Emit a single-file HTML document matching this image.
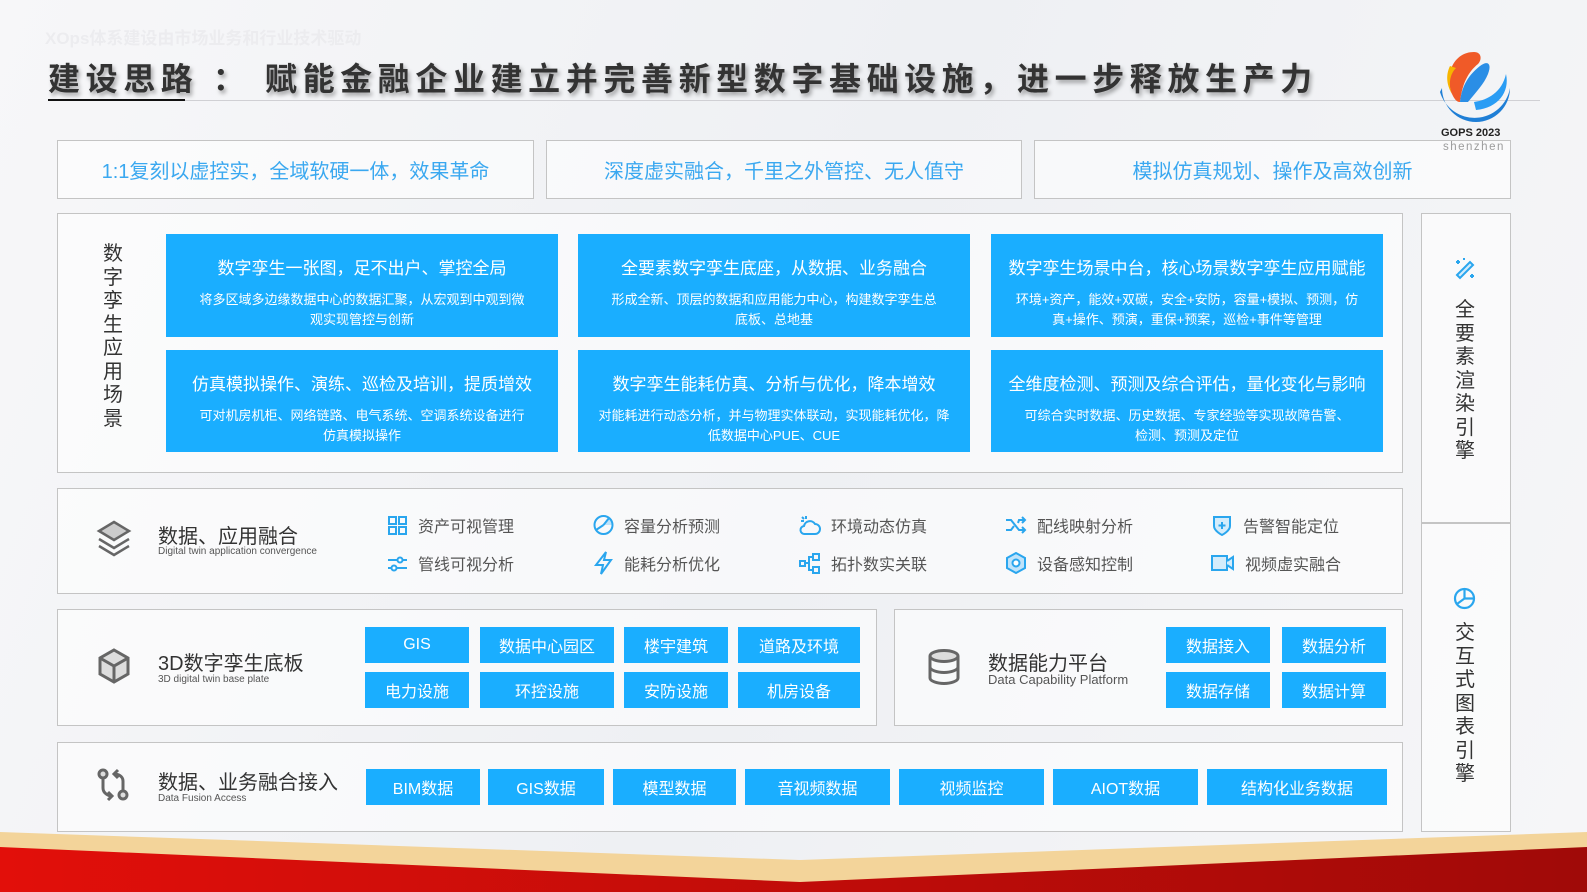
<!DOCTYPE html>
<html><head><meta charset="utf-8"><style>
*{margin:0;padding:0;box-sizing:border-box}
body{width:1587px;height:892px;position:relative;overflow:hidden;background:#f4f5f8;font-family:"Liberation Sans","Noto Sans CJK SC",sans-serif;color:#333}
.a{position:absolute}
.box{position:absolute;border:1.5px solid #c4c4c4;background:rgba(255,255,255,.55)}
.tb{color:#3aa8f0;font-size:20px;display:flex;align-items:center;justify-content:center}
.card{position:absolute;background:#1aaeff;color:#fff;text-align:center}
.card h3{font-weight:normal;font-size:17px;margin-top:20px}
.card p{font-size:13px;line-height:20px;margin:11px 30px 0}
.btn{position:absolute;background:#1aaeff;color:#fff;font-size:16px;display:flex;align-items:center;justify-content:center}
.vt{position:absolute;width:24px;font-size:20px;line-height:23.5px;text-align:center;color:#333}
.it{position:absolute;font-size:16px;color:#555;display:flex;align-items:center}
.it svg{margin-right:10px}
.t1{position:absolute;font-size:20px;color:#333}
.t2{position:absolute;font-size:10px;color:#555}
</style></head><body>
<div class="a" style="left:0;top:0;width:1587px;height:892px;background:linear-gradient(110deg,#f7f7f9 0%,#eef0f3 50%,#f6f6f8 100%)"></div>
<div class="a" style="left:45px;top:24px;font-size:17px;font-weight:bold;color:#ececef">XOps体系建设由市场业务和行业技术驱动</div>
<!-- title -->
<div class="a" style="left:48px;top:54px;font-size:32px;font-weight:bold;color:#333;letter-spacing:5.6px;white-space:nowrap;text-shadow:2px 3px 4px rgba(0,0,0,.35)">建设思路 ： 赋能金融企业建立并完善新型数字基础设施，进一步释放生产力</div>
<div class="a" style="left:48px;top:100px;width:1492px;height:1px;background:#d0d0d4"></div>
<div class="a" style="left:48px;top:99px;width:137px;height:2px;background:#111"></div>
<!-- logo -->
<svg class="a" style="left:1432px;top:44px" width="86" height="86" viewBox="0 0 86 86">
<path d="M8 48 A36 36 0 0 0 78 44 A34 34 0 0 1 10 44Z" fill="#1f7fd6"/>
<path d="M20 50 C12 30,22 8,42 8 C50 8,50 16,46 20 C36 28,30 40,28 58 C24 58,22 54,20 50Z" fill="#f05a28"/>
<path d="M28 58 C30 40,38 30,48 22 C56 16,60 20,56 30 C52 40,44 48,36 58Z" fill="#2a8ee6"/>
<path d="M42 58 C56 56,70 48,74 30 C78 48,66 64,44 66Z" fill="#2a9df4"/>
<path d="M18 22 C14 30,14 40,20 50 C16 40,18 30,24 24Z" fill="#f7b500"/>
</svg>
<div class="a" style="left:1441px;top:127px;font-size:11px;font-weight:bold;color:#222">GOPS 2023</div>
<div class="a" style="left:1443px;top:141px;font-size:11.5px;color:#222;letter-spacing:1.5px">shenzhen</div>
<!-- top boxes -->
<div class="box tb" style="left:57px;top:140px;width:477px;height:59px">1:1复刻以虚控实，全域软硬一体，效果革命</div>
<div class="box tb" style="left:546px;top:140px;width:476px;height:59px">深度虚实融合，千里之外管控、无人值守</div>
<div class="box tb" style="left:1034px;top:140px;width:477px;height:59px">模拟仿真规划、操作及高效创新</div>
<!-- scenario -->
<div class="box" style="left:57px;top:213px;width:1346px;height:260px"></div>
<div class="vt" style="left:101px;top:243px">数<br>字<br>孪<br>生<br>应<br>用<br>场<br>景</div>
<div class="card" style="left:166px;top:234px;width:392px;height:103px"><h3>数字孪生一张图，足不出户、掌控全局</h3><p>将多区域多边缘数据中心的数据汇聚，从宏观到中观到微观实现管控与创新</p></div>
<div class="card" style="left:578px;top:234px;width:392px;height:103px"><h3>全要素数字孪生底座，从数据、业务融合</h3><p>形成全新、顶层的数据和应用能力中心，构建数字孪生总底板、总地基</p></div>
<div class="card" style="left:991px;top:234px;width:392px;height:103px"><h3>数字孪生场景中台，核心场景数字孪生应用赋能</h3><p style="margin:11px 20px 0">环境+资产，能效+双碳，安全+安防，容量+模拟、预测，仿真+操作、预演，重保+预案，巡检+事件等管理</p></div>
<div class="card" style="left:166px;top:350px;width:392px;height:102px"><h3>仿真模拟操作、演练、巡检及培训，提质增效</h3><p>可对机房机柜、网络链路、电气系统、空调系统设备进行仿真模拟操作</p></div>
<div class="card" style="left:578px;top:350px;width:392px;height:102px"><h3>数字孪生能耗仿真、分析与优化，降本增效</h3><p style="margin:11px 20px 0">对能耗进行动态分析，并与物理实体联动，实现能耗优化，降低数据中心PUE、CUE</p></div>
<div class="card" style="left:991px;top:350px;width:392px;height:102px"><h3>全维度检测、预测及综合评估，量化变化与影响</h3><p>可综合实时数据、历史数据、专家经验等实现故障告警、检测、预测及定位</p></div>
<!-- row2 -->
<div class="box" style="left:57px;top:488px;width:1346px;height:106px"></div>
<svg class="a" style="left:96px;top:520px" width="36" height="38" viewBox="0 0 36 38"><path d="M18 2 L33 11 L18 20 L3 11Z" fill="#ccc" stroke="#666" stroke-width="2.5"/><path d="M3 19 L18 28 L33 19" fill="none" stroke="#666" stroke-width="2.5"/><path d="M3 26 L18 35 L33 26" fill="none" stroke="#666" stroke-width="2.5"/></svg>
<div class="t1" style="left:158px;top:520px">数据、应用融合</div>
<div class="t2" style="left:158px;top:546px">Digital twin application convergence</div>
<div class="it" style="left:387px;top:513px"><svg width="21" height="21" viewBox="0 0 21 21" fill="none" stroke="#2aa6ee" stroke-width="2"><rect x="2" y="2" width="7" height="7"/><rect x="12" y="2" width="7" height="7"/><rect x="2" y="12" width="7" height="7"/><rect x="12" y="12" width="7" height="7"/></svg>资产可视管理</div>
<div class="it" style="left:387px;top:551px"><svg width="21" height="21" viewBox="0 0 21 21" fill="none" stroke="#2aa6ee" stroke-width="2"><path d="M1 7H20M1 15H20"/><circle cx="13" cy="7" r="2.5" fill="#fff"/><circle cx="7" cy="15" r="2.5" fill="#fff"/></svg>管线可视分析</div>
<div class="it" style="left:593px;top:513px"><svg width="21" height="22" viewBox="0 0 21 22" fill="none" stroke="#2aa6ee" stroke-width="2"><path d="M10.5 11 L16 4 A9 9 0 0 1 19.5 11Z" fill="#bfe3fa" stroke="none"/><circle cx="10.5" cy="11" r="9"/><path d="M10.5 11L16 4M10.5 11L3 16" /></svg>容量分析预测</div>
<div class="it" style="left:593px;top:551px"><svg width="21" height="24" viewBox="0 0 21 24" fill="none" stroke="#2aa6ee" stroke-width="2"><path d="M13 1L3 14H10L8 23L18 9H11Z"/></svg>能耗分析优化</div>
<div class="it" style="left:799px;top:513px"><svg width="22" height="22" viewBox="0 0 22 22" fill="none" stroke="#2aa6ee" stroke-width="2"><path d="M6 20H16A5 5 0 0 0 16 10A6 6 0 0 0 5 12A4 4 0 0 0 6 20Z"/><path d="M7 2V5M2 7H5M3 3L5 5"/></svg>环境动态仿真</div>
<div class="it" style="left:799px;top:551px"><svg width="22" height="21" viewBox="0 0 22 21" fill="none" stroke="#2aa6ee" stroke-width="2"><rect x="1" y="8" width="5" height="5"/><rect x="14" y="1" width="6" height="6"/><rect x="14" y="14" width="6" height="6"/><path d="M6 10H10V4H14M10 10V17H14"/></svg>拓扑数实关联</div>
<div class="it" style="left:1005px;top:513px"><svg width="22" height="20" viewBox="0 0 22 20" fill="none" stroke="#2aa6ee" stroke-width="2"><path d="M1 5H6L14 15H20M1 15H6L9 11M13 8L14 5H20M17 2L20 5L17 8M17 12L20 15L17 18"/></svg>配线映射分析</div>
<div class="it" style="left:1005px;top:551px"><svg width="22" height="22" viewBox="0 0 22 22" fill="#bfe3fa" stroke="#2aa6ee" stroke-width="2"><path d="M11 1L20 6V16L11 21L2 16V6Z"/><circle cx="11" cy="11" r="3.5" fill="#fff"/></svg>设备感知控制</div>
<div class="it" style="left:1211px;top:513px"><svg width="22" height="22" viewBox="0 0 22 22" fill="#d4ecfb" stroke="#2aa6ee" stroke-width="2"><path d="M3 3H19V12C19 17 11 21 11 21C11 21 3 17 3 12Z"/><path d="M11 8V15M7.5 11.5H14.5" fill="none"/></svg>告警智能定位</div>
<div class="it" style="left:1211px;top:551px"><svg width="24" height="20" viewBox="0 0 24 20" fill="#d4ecfb" stroke="#2aa6ee" stroke-width="2"><rect x="1" y="3" width="15" height="14"/><path d="M16 8L22 4V16L16 12"/></svg>视频虚实融合</div>
<!-- row3 -->
<div class="box" style="left:57px;top:609px;width:820px;height:117px"></div>
<svg class="a" style="left:96px;top:647px" width="36" height="38" viewBox="0 0 36 38"><path d="M18 3L32 11V27L18 35L4 27V11Z" fill="#ddd" stroke="#666" stroke-width="3"/><path d="M4 11L18 19L32 11M18 19V35" fill="none" stroke="#666" stroke-width="3"/></svg>
<div class="t1" style="left:158px;top:647px">3D数字孪生底板</div>
<div class="t2" style="left:158px;top:674px">3D digital twin base plate</div>
<div class="btn" style="left:365px;top:627px;width:104px;height:36px">GIS</div>
<div class="btn" style="left:480px;top:627px;width:134px;height:36px">数据中心园区</div>
<div class="btn" style="left:624px;top:627px;width:104px;height:36px">楼宇建筑</div>
<div class="btn" style="left:738px;top:627px;width:122px;height:36px">道路及环境</div>
<div class="btn" style="left:365px;top:672px;width:104px;height:36px">电力设施</div>
<div class="btn" style="left:480px;top:672px;width:134px;height:36px">环控设施</div>
<div class="btn" style="left:624px;top:672px;width:104px;height:36px">安防设施</div>
<div class="btn" style="left:738px;top:672px;width:122px;height:36px">机房设备</div>
<div class="box" style="left:894px;top:609px;width:509px;height:117px"></div>
<svg class="a" style="left:927px;top:648px" width="34" height="38" viewBox="0 0 34 38" fill="#ddd" stroke="#666" stroke-width="3"><ellipse cx="17" cy="8" rx="14" ry="5.5"/><path d="M3 8V30C3 33 10 35.5 17 35.5C24 35.5 31 33 31 30V8M3 19C3 22 10 24.5 17 24.5C24 24.5 31 22 31 19" fill="none"/></svg>
<div class="t1" style="left:988px;top:647px">数据能力平台</div>
<div class="a" style="left:988px;top:672px;font-size:13px;color:#555">Data Capability Platform</div>
<div class="btn" style="left:1166px;top:627px;width:104px;height:36px">数据接入</div>
<div class="btn" style="left:1282px;top:627px;width:104px;height:36px">数据分析</div>
<div class="btn" style="left:1166px;top:672px;width:104px;height:36px">数据存储</div>
<div class="btn" style="left:1282px;top:672px;width:104px;height:36px">数据计算</div>
<!-- row4 -->
<div class="box" style="left:57px;top:742px;width:1346px;height:90px"></div>
<svg class="a" style="left:96px;top:768px" width="36" height="34" viewBox="0 0 36 34" fill="none" stroke="#666" stroke-width="3"><circle cx="7" cy="6" r="4" fill="#ddd"/><circle cx="27" cy="27" r="4" fill="#ddd"/><path d="M7 10V20C7 25 12 28 16 28M12 24L16 28L12 32"/><path d="M27 23V13C27 8 22 6 18 6M22 2L18 6L22 10"/></svg>
<div class="t1" style="left:158px;top:766px">数据、业务融合接入</div>
<div class="t2" style="left:158px;top:793px">Data Fusion Access</div>
<div class="btn" style="left:366px;top:769px;width:114px;height:36px">BIM数据</div>
<div class="btn" style="left:488px;top:769px;width:116px;height:36px">GIS数据</div>
<div class="btn" style="left:613px;top:769px;width:123px;height:36px">模型数据</div>
<div class="btn" style="left:745px;top:769px;width:145px;height:36px">音视频数据</div>
<div class="btn" style="left:899px;top:769px;width:145px;height:36px">视频监控</div>
<div class="btn" style="left:1053px;top:769px;width:145px;height:36px">AIOT数据</div>
<div class="btn" style="left:1207px;top:769px;width:180px;height:36px">结构化业务数据</div>
<!-- right column -->
<div class="box" style="left:1421px;top:213px;width:90px;height:619px"></div>
<div class="a" style="left:1421px;top:522px;width:90px;height:1.5px;background:#c4c4c4"></div>
<svg class="a" style="left:1453px;top:257px" width="24" height="24" viewBox="0 0 24 24" fill="none" stroke="#2aa6ee" stroke-width="2"><path d="M5 20L18 7L21 10L8 23Z" fill="#d4ecfb" transform="translate(-1,-2)"/><path d="M5 3V7M3 5H7M19 17V21M17 19H21M11 1V3M10 2H12"/></svg>
<div class="vt" style="left:1453px;top:299px">全<br>要<br>素<br>渲<br>染<br>引<br>擎</div>
<svg class="a" style="left:1453px;top:587px" width="23" height="23" viewBox="0 0 23 23" fill="none" stroke="#2aa6ee" stroke-width="2.2"><circle cx="11.5" cy="11.5" r="9.5"/><path d="M11.5 2V11.5L4 17M11.5 11.5H21"/></svg>
<div class="vt" style="left:1453px;top:622px">交<br>互<br>式<br>图<br>表<br>引<br>擎</div>
<!-- bottom band -->
<svg class="a" style="left:0;top:820px" width="1587" height="72" viewBox="0 0 1587 72"><polygon points="0,12 800,40 1587,12 1587,72 0,72" fill="#f3d49a"/><defs><linearGradient id="g" x1="0" x2="1"><stop offset="0" stop-color="#e20f0a"/><stop offset="1" stop-color="#a00a08"/></linearGradient></defs><polygon points="0,27 800,62 1587,27 1587,72 0,72" fill="url(#g)"/></svg>
</body></html>
